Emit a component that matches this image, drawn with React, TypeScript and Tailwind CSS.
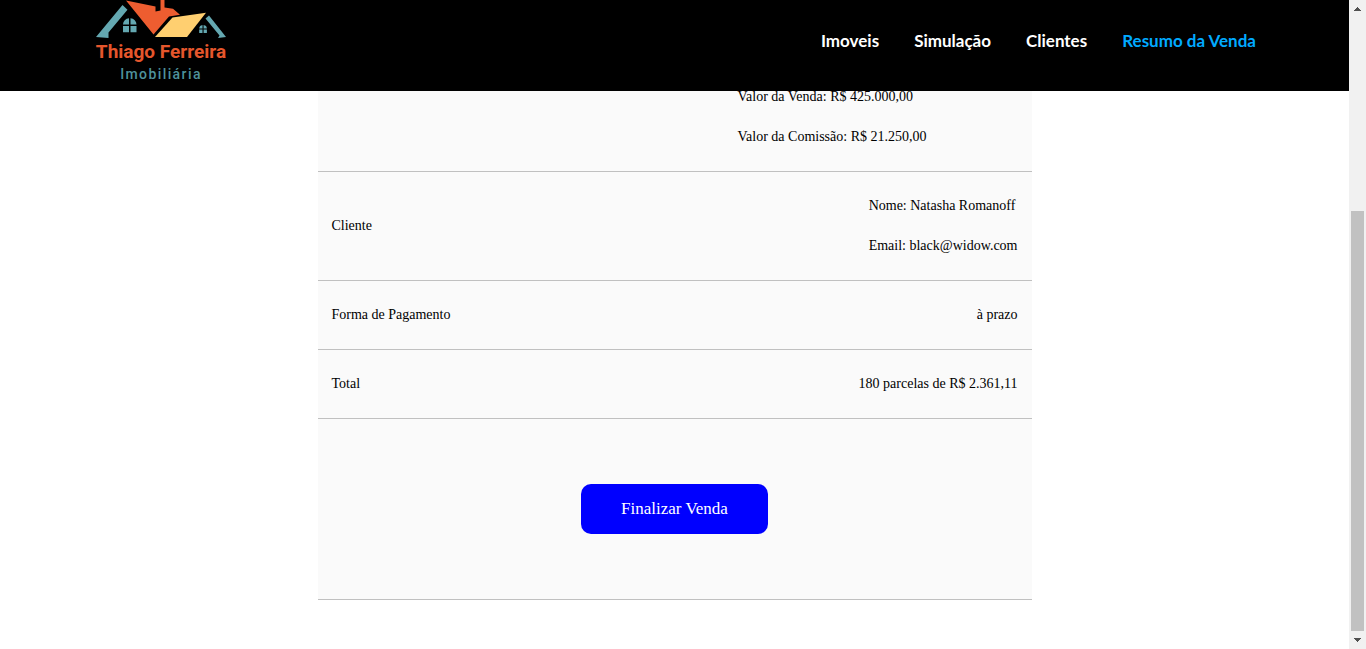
import React from "react";

const links = [
  { label: "Imoveis", active: false },
  { label: "Simulação", active: false },
  { label: "Clientes", active: false },
  { label: "Resumo da Venda", active: true },
];

const rows = [
  {
    label: "",
    lines: ["Valor da Venda: R$ 425.000,00", "Valor da Comissão: R$ 21.250,00"],
    wide: true,
  },
  {
    label: "Cliente",
    lines: ["Nome: Natasha Romanoff", "Email: black@widow.com"],
    wide: false,
  },
  { label: "Forma de Pagamento", lines: ["à prazo"], wide: false },
  { label: "Total", lines: ["180 parcelas de R$ 2.361,11"], wide: false },
];

function Logo() {
  return (
    <a
      href="#inicio"
      className="flex flex-col items-center whitespace-nowrap font-['Roboto',sans-serif]"
    >
      <svg width="134" height="40" viewBox="0 0 134 40" aria-hidden="true">
        <path
          d="M28.5 5 33.5 9.7 14.5 32.5 14.5 38 2 37z"
          fill="#64a8b1"
        />
        <path d="M32 0.5 61.5 6.5V11.5L66.5 10.5V0H70.5V7.5L79 8.7 86 14.7 75 16.5 59.5 34.5z" fill="#ee5d30" />
        <path d="M78.5 17.5 112 12.7 93 37H61z" fill="#ffcf70" />
        <path d="M111.5 18.5 115 15.5 132 37 124 38 125.5 35.5z" fill="#64a8b1" />
        <path
          d="M35 18.3V24.5H29A6.2 6.2 0 0 1 35 18.3zM36.5 18.3A6.2 6.2 0 0 1 42.5 24.5H36.5zM29 26H35V32.3H29zM36.5 26H42.5V32.3H36.5z"
          fill="#64a8b1"
        />
        <path
          d="M108.5 25V28.6H105.2A3.8 3.8 0 0 1 108.5 25zM109.6 25A3.8 3.8 0 0 1 112.9 28.6H109.6zM105.2 29.6H108.5V33H105.2zM109.6 29.6H112.9V33H109.6z"
          fill="#64a8b1"
        />
      </svg>
      <span className="text-[19px] leading-6 font-bold text-[#e5562c]">Thiago Ferreira</span>
      <span className="text-sm leading-5 font-medium tracking-widest text-[#4e929b]">
        Imobiliária
      </span>
    </a>
  );
}

function Header() {
  return (
    <header className="absolute inset-x-0 top-0 z-10 flex h-[91px] items-start justify-between bg-black pr-[93px] pl-[94px]">
      <Logo />
      <nav className="flex gap-[35px] pt-[29px] font-['Lato',sans-serif] text-[17px] leading-6 font-bold whitespace-nowrap">
        {links.map((link) => (
          <a
            key={link.label}
            href="#"
            className={link.active ? "text-[#00aaff]" : "text-white"}
          >
            {link.label}
          </a>
        ))}
      </nav>
    </header>
  );
}

function Scrollbar() {
  return (
    <div className="flex w-[17px] shrink-0 flex-col items-center bg-[#f1f1f1]" aria-hidden="true">
      <svg width="17" height="17" viewBox="0 0 17 17" shapeRendering="crispEdges">
        <path d="M8 7h1v1h1v1h1v1h1v1H5v-1h1V9h1V8h1z" fill="#505050" />
      </svg>
      <div className="flex w-[13px] flex-1 flex-col">
        <div className="grow-[194]" />
        <div className="grow-[420] bg-[#c1c1c1]" />
        <div className="grow" />
      </div>
      <svg width="17" height="17" viewBox="0 0 17 17" shapeRendering="crispEdges">
        <path d="M5 6h7v1h-1v1h-1v1H9v1H8V9H7V8H6V7H5z" fill="#505050" />
      </svg>
    </div>
  );
}

export default function App() {
  return (
    <div className="flex h-screen bg-white font-['Liberation_Serif',serif] text-black">
      <div className="relative min-w-0 flex-1 overflow-hidden">
        <Header />
        <main className="flex justify-center pt-[63px]">
          <table className="w-full max-w-[714px] border-collapse bg-[#fafafa] text-sm">
            <tbody>
              {rows.map((row, i) => (
                <tr key={i} className="border-b border-[#c0c0c0]">
                  <td className="py-[14px] pl-[14px] leading-10">{row.label}</td>
                  <td className="py-[14px] pr-[14px] leading-10">
                    <div className={row.wide ? "ml-auto w-[280px]" : "ml-auto w-fit"}>
                      {row.lines.map((line) => (
                        <p key={line}>{line}</p>
                      ))}
                    </div>
                  </td>
                </tr>
              ))}
              <tr className="border-b border-[#c0c0c0]">
                <td colSpan={2} className="py-[65px]">
                  <button
                    type="button"
                    className="mx-auto block h-[50px] rounded-[10px] bg-[#0000ff] px-10 text-[17px] text-white"
                  >
                    Finalizar Venda
                  </button>
                </td>
              </tr>
            </tbody>
          </table>
        </main>
      </div>
      <Scrollbar />
    </div>
  );
}
